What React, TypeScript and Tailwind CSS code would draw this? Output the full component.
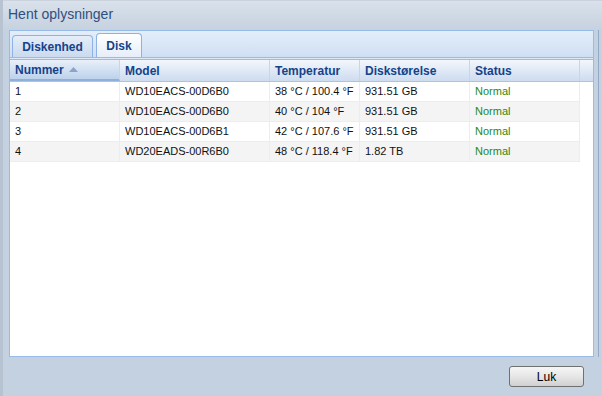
import { useState } from 'react';

const columns = [
  { key: 'nummer', label: 'Nummer', width: 'w-[110px]' },
  { key: 'model', label: 'Model', width: 'w-[150px]' },
  { key: 'temp', label: 'Temperatur', width: 'w-[90px]' },
  { key: 'size', label: 'Diskstørelse', width: 'w-[110px]' },
  { key: 'status', label: 'Status', width: 'w-[110px]' },
];

const disks = [
  { nummer: '1', model: 'WD10EACS-00D6B0', temp: '38 °C / 100.4 °F', size: '931.51 GB', status: 'Normal' },
  { nummer: '2', model: 'WD10EACS-00D6B0', temp: '40 °C / 104 °F', size: '931.51 GB', status: 'Normal' },
  { nummer: '3', model: 'WD10EACS-00D6B1', temp: '42 °C / 107.6 °F', size: '931.51 GB', status: 'Normal' },
  { nummer: '4', model: 'WD20EADS-00R6B0', temp: '48 °C / 118.4 °F', size: '1.82 TB', status: 'Normal' },
];

export default function App() {
  const [tab, setTab] = useState('disk');

  return (
    <div className="w-[602px] h-[396px] flex flex-col bg-[#c4d1e1] border-l-[3px] border-l-[#b8c3d1] overflow-hidden font-['Liberation_Sans',Arial,sans-serif]">
      {/* title bar */}
      <div className="h-[30px] shrink-0 flex items-center pl-[5px] bg-gradient-to-b from-[#d9e1eb] to-[#c6d2e0] border-t border-[#c9d2dd]">
        <span className="text-[14px] text-[#2f4f7f] mt-[-3px]">Hent oplysninger</span>
      </div>

      <div className="flex-1 flex min-h-0 pl-[6px] pr-[3px]">
        <div className="flex-1 flex flex-col border border-[#99bbe8] bg-white">
          {/* tab strip */}
          <div className="h-[27px] shrink-0 flex items-end gap-[3px] pl-[2px] bg-gradient-to-b from-[#e3eefa] to-[#cfdff3] border-b border-[#99bbe8]">
            <button
              onClick={() => setTab('unit')}
              className={`w-[81px] rounded-t-[4px] border border-b-0 border-[#8db2e3] text-[12px] font-bold text-[#15428b] ${
                tab === 'unit'
                  ? 'h-[24px] bg-gradient-to-b from-white to-[#e6eefa]'
                  : 'h-[22px] bg-gradient-to-b from-[#e5edf8] to-[#cbdaee]'
              }`}
            >
              Diskenhed
            </button>
            <button
              onClick={() => setTab('disk')}
              className={`w-[46px] rounded-t-[4px] border border-b-0 border-[#8db2e3] text-[12px] font-bold text-[#15428b] ${
                tab === 'disk'
                  ? 'h-[24px] bg-gradient-to-b from-white to-[#e6eefa]'
                  : 'h-[22px] bg-gradient-to-b from-[#e5edf8] to-[#cbdaee]'
              }`}
            >
              Disk
            </button>
          </div>
          <div className="h-[2px] shrink-0 bg-[#dfe9f6] border-b border-[#99bbe8]" />

          {/* grid header */}
          <div className="h-[22px] shrink-0 flex bg-gradient-to-b from-[#f3f7fc] to-[#cddcef] border-b border-[#aac4e6]">
            {columns.map((c, i) => (
              <div
                key={c.key}
                className={`${c.width} shrink-0 flex items-center pl-[5px] border-r border-r-[#c5d6ec] text-[12px] font-bold text-[#15428b] ${
                  i === 0 ? 'bg-gradient-to-b from-[#e9f0f9] to-[#bdd2ec] border-b-2 border-b-[#8eb0dc]' : ''
                }`}
              >
                {c.label}
                {i === 0 && (
                  <svg width="9" height="5" viewBox="0 0 9 5" className="ml-[5px]">
                    <path d="M0 5 L4.5 0 L9 5 Z" fill="#8aa3c6" />
                  </svg>
                )}
              </div>
            ))}
            <div className="flex-1" />
          </div>

          {/* rows */}
          <div className="flex-1">
            {disks.map((d, r) => (
              <div
                key={d.nummer}
                className={`h-[20px] w-[570px] flex border-b border-[#ededed] border-r border-r-[#ededed] text-[11px] text-[#111] ${
                  r % 2 === 1 ? 'bg-[#f4f4f4]' : 'bg-white'
                }`}
              >
                <div className="w-[110px] shrink-0 flex items-center pl-[5px] border-r border-[#ededed]">{d.nummer}</div>
                <div className="w-[150px] shrink-0 flex items-center pl-[5px] border-r border-[#ededed]">{d.model}</div>
                <div className="w-[90px] shrink-0 flex items-center pl-[5px] border-r border-[#ededed]">{d.temp}</div>
                <div className="w-[110px] shrink-0 flex items-center pl-[5px] border-r border-[#ededed]">{d.size}</div>
                <div className="w-[109px] shrink-0 flex items-center pl-[5px] text-[#1e8a1e]">{d.status}</div>
              </div>
            ))}
          </div>
        </div>
        <div className="w-[4px]" />
        <div className="w-[1px] bg-[#93a9c6]" />
      </div>

      {/* footer */}
      <div className="h-[39px] shrink-0 flex items-center justify-end pr-[18px]">
        <button className="w-[75px] h-[21px] rounded-[3px] border border-[#707070] bg-gradient-to-b from-[#f6f6f6] via-[#e6e6e6] to-[#d0d0d0] text-[12px] text-black">
          Luk
        </button>
      </div>
    </div>
  );
}
